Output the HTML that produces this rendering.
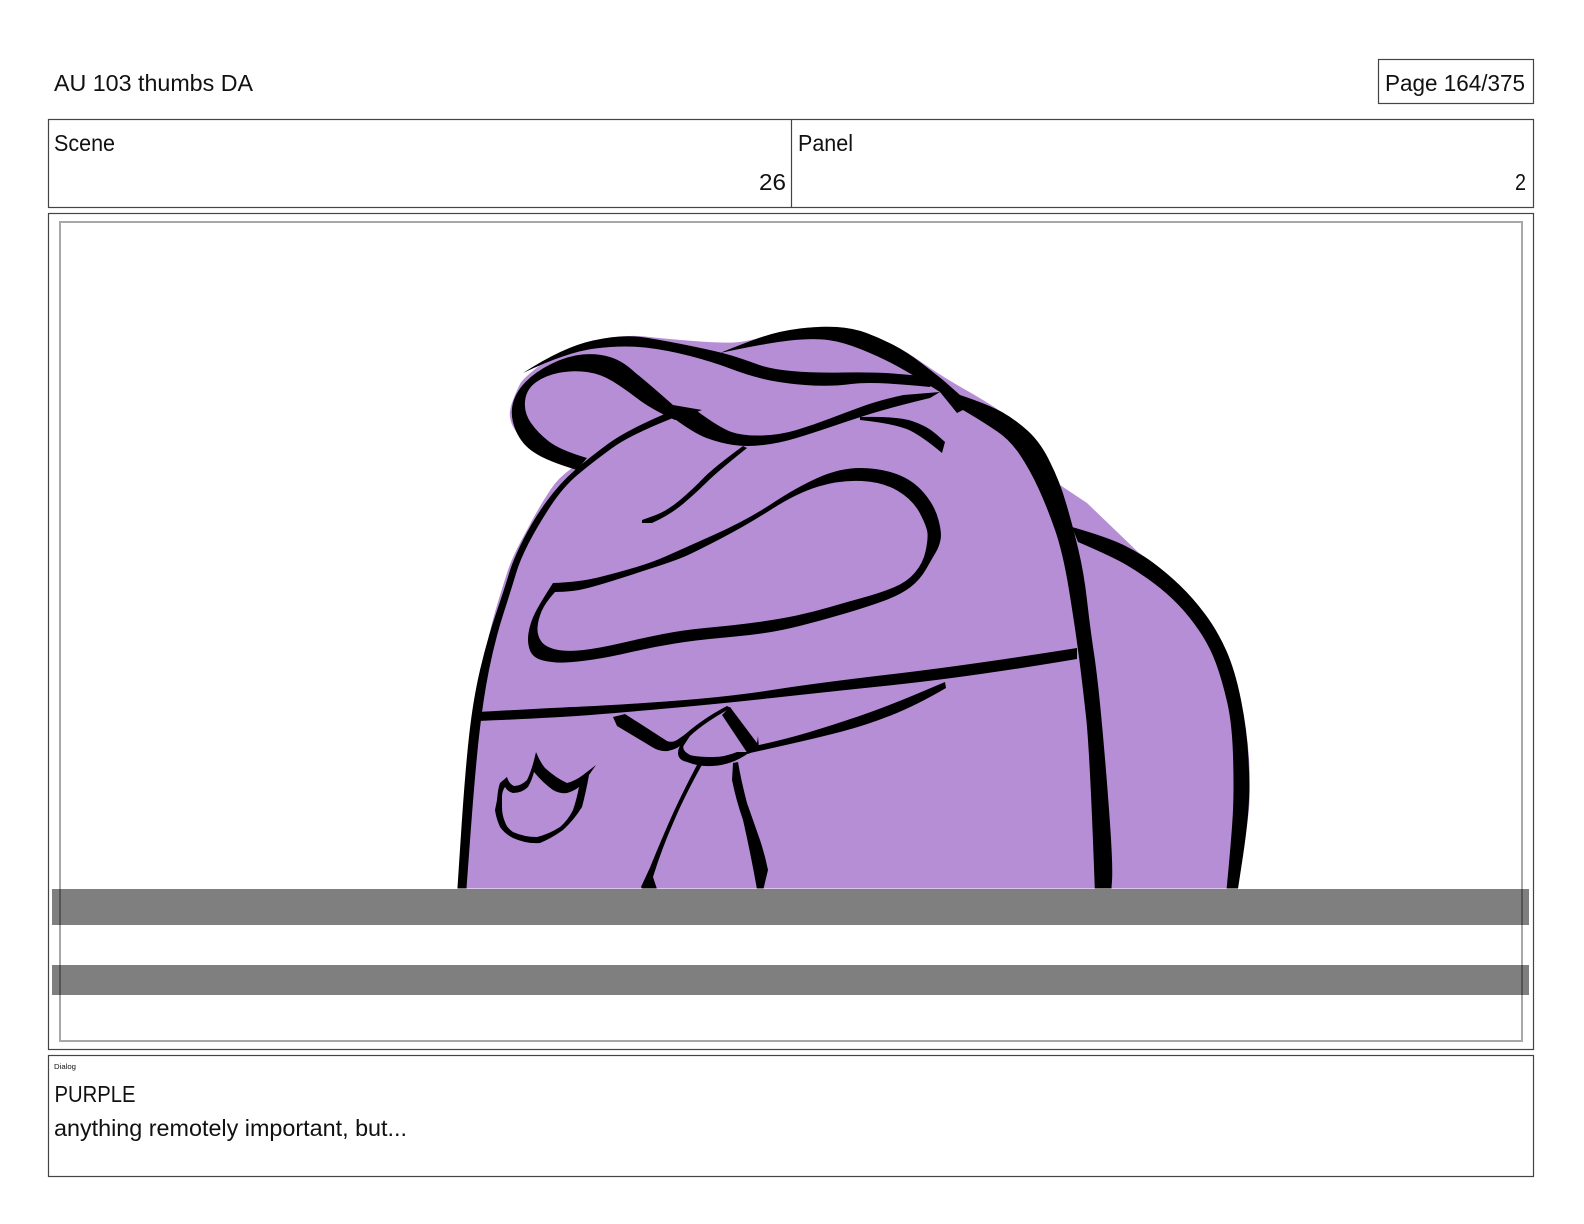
<!DOCTYPE html>
<html><head><meta charset="utf-8"><title>AU 103 thumbs DA</title>
<style>
html,body{margin:0;padding:0;background:#fff;width:1584px;height:1224px;overflow:hidden}
svg{position:absolute;left:0;top:0;display:block}
text{font-family:"Liberation Sans",sans-serif;font-size:23.5px;fill:#111}
</style></head><body>
<svg width="1584" height="1224" viewBox="0 0 1584 1224" xmlns="http://www.w3.org/2000/svg">
<defs>
<clipPath id="c"><rect x="52" y="222" width="1470" height="666.5"/></clipPath>
</defs>
<rect width="1584" height="1224" fill="#fff"/>
<g clip-path="url(#c)">
<path fill="#b68ed6" d="M458 895L470 760L478 690Q487 640 495 612Q503 585 508 570Q513 555 527 530Q540 505 551 489Q558 478 572 468Q550 458 540 451Q523 440 517 433Q511 425 510 417Q509 410 513 400Q517 390 520 384Q523 378 543 363Q563 348 593 341Q623 334 645 336.5Q667 339 693.5 341Q720 343 733.5 342.5Q747 342 763.5 336.5Q780 331 800 328.5Q820 326 836.5 327Q853 328 866.5 333Q880 338 893.5 345Q907 352 925 364.5Q943 377 965 389.5Q987 402 1000 411Q1013 420 1025 431.5Q1037 443 1050 470L1057 483L1087 503L1138 552Q1167 573 1180 585.5Q1193 598 1205 614Q1217 630 1226 650Q1235 670 1241 700Q1247 730 1249 758Q1251 787 1249 808.5Q1247 830 1237 895Z"/>
<g fill="#000">
<path d="M667 413Q627 430 608.5 443.5Q590 457 575 470Q560 483 546.5 501.5Q533 520 523 540Q513 560 509 573.5Q505 587 496 613.5Q487 640 480 670Q473 700 469 736.5Q465 773 461 834L457 895L466 895L470.5 834Q475 773 479 736.5Q483 700 489 670Q495 640 503.5 613.5Q512 587 516 573.5Q520 560 528.5 543.5Q537 527 550 507Q563 487 578 474.5Q593 462 611.5 448.5Q630 435 673 418Z"/>
<path d="M702 410L673 405Q647 382 635 372.5Q623 361 610 357Q597 353 582 354.5Q567 356 551 364Q535 372 525 382.5Q515 393 512.5 405Q510 417 516 431Q522 445 535 453Q547 461 577 470L587 458Q560 450 549 441.5Q538 433 531 423Q524 413 525 401.5Q526 390 535 383Q544 376 558 373Q573 370 587 372Q601 374 613 381.5Q625 389 638 399Q651 409 675 420Z"/>
<path d="M697 411Q720 428 731.5 432Q743 436 761.5 435.5Q780 435 796.5 430Q813 425 830 418.5Q847 412 863.5 406Q880 400 903.5 395L940 392L930 398Q893 407 875 412.5Q857 418 835 425.5Q813 433 796.5 438Q780 443 763.5 445Q747 447 733.5 445Q720 443 706.5 438Q693 433 668 414Z"/>
<path d="M523 373Q563 347 593 340.5Q623 334 645 337.5Q667 341 693.5 346.5Q720 352 731.5 355.5Q743 359 756.5 364Q770 369 791.5 371Q813 373 843 372.5Q873 372 893 373.5L935 377L930 387Q873 381 851.5 384Q830 387 805 385Q780 383 763.5 379Q747 375 730 368.5Q713 362 690 356Q667 350 645 347.5Q623 345 595 348.5Q567 352 523 373Z"/>
<path d="M720 353Q747 342 763.5 336.5Q780 331 800 328.5Q820 326 836.5 327Q853 328 866.5 333Q880 338 893.5 345Q907 352 920 362Q933 372 943 380L960 395Q987 404 1002 412Q1016 420 1028 431Q1041 443 1050 462Q1060 482 1066 503Q1072 523 1078 548Q1084 573 1087 600Q1090 627 1094 653.5Q1098 680 1102.5 730Q1107 780 1110 823.5Q1113 867 1112 881L1111 895L1095 895Q1090 753 1086 716.5Q1082 680 1078.5 653.5Q1075 627 1069 590Q1063 553 1055 530Q1047 507 1038.5 488.5Q1030 470 1020 455Q1010 440 996.5 431Q983 422 973 416L963 410L957 413L940 392Q910 373 895 365Q880 357 861.5 349.5Q843 342 828 340Q813 338 790 340.5Q767 343 720 353Z"/>
<path d="M1072 527Q1107 537 1123.5 545Q1140 553 1153.5 563Q1167 573 1180 585.5Q1193 598 1205 614Q1217 630 1226 650Q1235 670 1241 700Q1247 730 1248.5 758.5Q1250 787 1248.5 808.5Q1247 830 1242 862.5L1237 895L1226 895Q1232 833 1233 810Q1234 787 1233 755Q1232 723 1227 701.5Q1222 680 1216 663.5Q1210 647 1200 632Q1190 617 1178.5 605Q1167 593 1153.5 583Q1140 573 1126.5 565Q1113 557 1078 542Z"/>
<path d="M743 446Q713 468 703 478.5Q693 489 680 500Q667 511 654.5 515.5L642 520L642 523L652 523Q670 515 683.5 503.5Q697 492 707 482Q717 472 747 448Z"/>
<path d="M860 417Q897 416 912 421Q927 426 936 434L945 442L942 453Q923 437 910 430.5Q897 424 860 420Z"/>
<path fill-rule="evenodd" d="M553 583Q580 582 600 577Q620 572 636.5 567Q653 562 666.5 556Q680 550 713.5 535Q747 520 772 503.5Q797 487 818.5 477.5Q840 468 860 468Q880 468 896.5 474Q913 480 924 493Q935 506 938.5 520Q942 533 940.5 540Q939 547 936 552Q933 557 926.5 568.5Q920 580 910 587.5Q900 595 883.5 601Q867 607 845 613.5Q823 620 801.5 625.5Q780 631 761.5 633.5Q743 636 720 638Q697 640 675 643.5Q653 647 631.5 652Q610 657 593.5 659.5Q577 662 565 662.5Q553 663 543 660.5Q533 658 530 650.5Q527 643 528.5 633Q530 623 535 613Q540 603 553 583ZM555 592Q573 592 588 588Q603 584 620 578.5Q637 573 657 566.5Q677 560 687 555.5Q697 551 722 538Q747 525 772 509Q797 493 818.5 486.5Q840 480 861.5 481Q883 482 898 491Q913 500 920 513.5Q927 527 927.5 533.5Q928 540 925.5 551.5Q923 563 915 572.5Q907 582 893.5 587.5Q880 593 863.5 597.5Q847 602 830 607Q813 612 796.5 615.5Q780 619 758.5 622Q737 625 710 627.5Q683 630 663 634Q643 638 621.5 643Q600 648 583.5 650Q567 652 556 649.5Q545 647 541 641Q537 635 537.5 627.5Q538 620 541.5 611.5Q545 603 555 592Z"/>
<path d="M478 712Q550 708 583.5 706.5Q617 705 672 701Q727 697 772 690Q817 683 893.5 674Q970 665 1077 648L1077 659Q970 677 893.5 685Q817 693 772 698Q727 703 672 708Q617 713 583.5 715.5Q550 718 478 721Z"/>
<path d="M613 717L625 714L667 741Q672 743 677 740L690 731Q692 733 685 742Q678 749 668 751Q660 752 652 747L617 726Z"/>
<path d="M680 739Q700 720 727 706L731 708Q705 722 690 736L684 745Z"/>
<path d="M688 737Q678 745 678 753Q678 760 687 762Q700 767 712 766Q733 765 750 752L737 752Q725 757 713 757Q697 757 690 755Q681 750 684 745Z"/>
<path d="M730 707L757 743L758 736L759 749L748 754L722 715Z"/>
<path d="M750 747Q783 740 808 732.5Q833 725 858 716.5Q883 708 913 695.5L945 682L946 688Q917 705 892 715Q867 725 842 731.5Q817 738 783.5 745.5L750 753Z"/>
<path d="M698 763Q680 797 668.5 823.5Q657 850 650 867.5L641 887L647 895L659 895L653 877Q662 848 674 821Q685 795 703 763Z"/>
<path d="M733 763L732 780Q736 800 743 820Q751 855 758 895L762 895L768 870Q765 855 760 840Q753 820 747 803Q741 780 738 762Z"/>
<path fill-rule="evenodd" d="M497 800Q498 788 500 783L507 777Q509 784 514 786Q521 786 527 780Q532 770 536 752Q540 762 545 768Q556 778 567 783Q575 781 583 775L596 765L589 775Q586 792 582 807Q574 820 563 830Q552 838 540 843Q526 844 513 838Q505 834 500 827Q496 818 495 810ZM502 797Q502 791 505 787Q508 792 513 793Q522 793 528 787Q532 780 534 772Q543 783 553 790Q560 794 567 793Q574 791 579 787Q577 798 573 810Q568 820 560 827Q549 834 537 837Q524 837 513 832Q507 828 505 822Q502 815 502 807Z"/>
</g>
</g>
<g fill="none" stroke="#444" stroke-width="1.2">
<rect x="1378.5" y="59.5" width="155" height="44"/>
<rect x="48.5" y="119.5" width="1485" height="88"/>
<line x1="791.5" y1="119.5" x2="791.5" y2="207.5"/>
<rect x="48.5" y="213.5" width="1485" height="836"/>
<rect x="48.5" y="1055.5" width="1485" height="121"/>
</g>
<rect x="60" y="222" width="1462" height="819" fill="none" stroke="#a8a8a8" stroke-width="2"/>
<rect x="52" y="889" width="1477" height="36" fill="#000" fill-opacity=".5"/>
<rect x="52" y="965" width="1477" height="30" fill="#000" fill-opacity=".5"/>
<text x="54" y="91" textLength="199" lengthAdjust="spacingAndGlyphs">AU 103 thumbs DA</text>
<text x="1385" y="91" textLength="140" lengthAdjust="spacingAndGlyphs">Page 164/375</text>
<text x="54" y="151" textLength="61" lengthAdjust="spacingAndGlyphs">Scene</text>
<text x="798" y="151" textLength="55" lengthAdjust="spacingAndGlyphs">Panel</text>
<text x="759" y="190" textLength="27" lengthAdjust="spacingAndGlyphs">26</text>
<text x="1515" y="190" textLength="11" lengthAdjust="spacingAndGlyphs">2</text>
<text x="54" y="1069" textLength="22" lengthAdjust="spacingAndGlyphs" style="font-size:7.5px">Dialog</text>
<text x="54.5" y="1102" textLength="81" lengthAdjust="spacingAndGlyphs">PURPLE</text>
<text x="54" y="1136" textLength="353" lengthAdjust="spacingAndGlyphs">anything remotely important, but...</text>
</svg>
</body></html>
